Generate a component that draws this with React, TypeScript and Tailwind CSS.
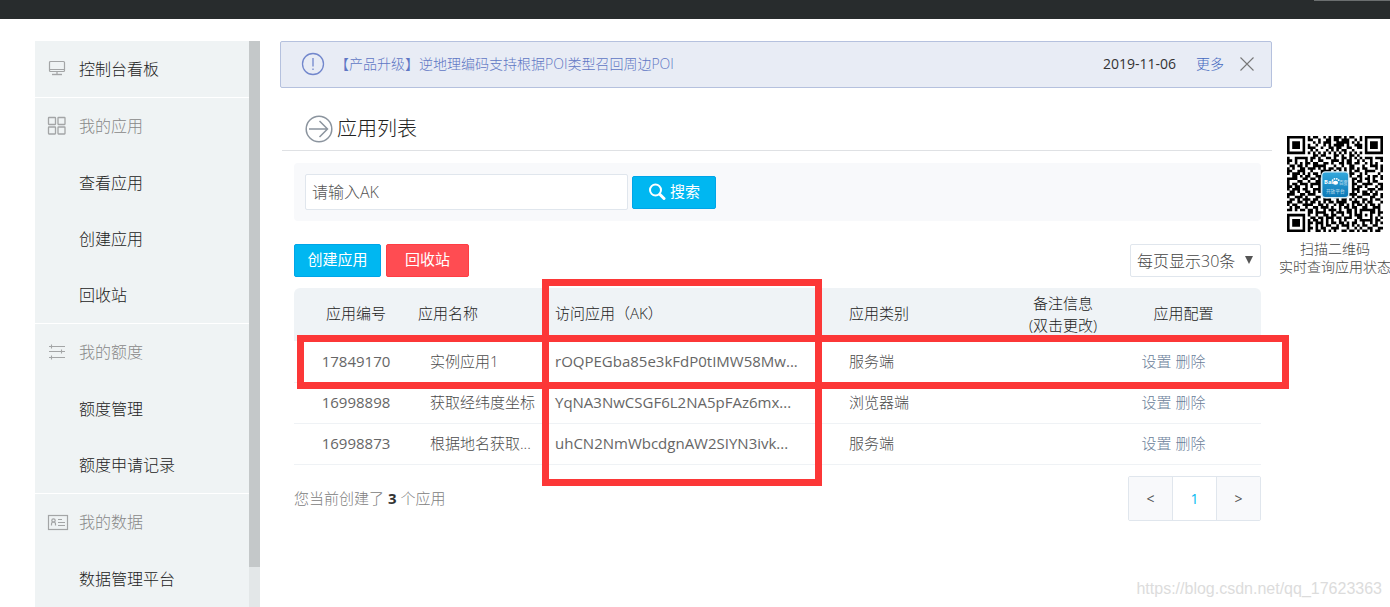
import { useState } from "react";

interface NavGroup {
  title: string;
  icon: "grid" | "sliders" | "card";
  items: string[];
}

interface AppRow {
  id: string;
  name: string;
  ak: string;
  type: string;
}

const groups: NavGroup[] = [
  { title: "我的应用", icon: "grid", items: ["查看应用", "创建应用", "回收站"] },
  { title: "我的额度", icon: "sliders", items: ["额度管理", "额度申请记录"] },
  { title: "我的数据", icon: "card", items: ["数据管理平台"] },
];

const rows: AppRow[] = [
  { id: "17849170", name: "实例应用1", ak: "rOQPEGba85e3kFdP0tIMW58Mw...", type: "服务端" },
  { id: "16998898", name: "获取经纬度坐标", ak: "YqNA3NwCSGF6L2NA5pFAz6mx...", type: "浏览器端" },
  { id: "16998873", name: "根据地名获取...", ak: "uhCN2NmWbcdgnAW2SIYN3ivk...", type: "服务端" },
];

const qrRows = [
  "#######.#.##..#.#.###.#.##..#.#######",
  "#.....#.##..#..##.##.###..#.#.#.....#",
  "#.###.#...#.#.###..#####.#.#..#.###.#",
  "#.###.#.#..#..#.#.####.#..###.#.###.#",
  "#.###.#.###..#..##.##..##..##.#.###.#",
  "#.....#..#.#...#.#.#.##..#....#.....#",
  "#######.#.#.#.#.#.#.#.#.#.#.#.#######",
  "..........##.##...##.#..##.#.........",
  "#..#####.##.#..##.#..##.#.#.#.###.###",
  "##.#...#.#..##...###.#.##..#.#..#...#",
  "#..#.#.##.##..##.#..##.##.##..#.#.#..",
  ".##.##.#..#####...#..#..##...#..###.#",
  "#.#..##.###.#.#.##.##.#.##.#.##...#.#",
  "##..###..#...####.#.#.#.#.##..####..#",
  "#.###.#.#.##.#..#.#..#..##..#.#....#.",
  "..##.#.##..###..........#..##..#.##.#",
  "####..##.##.#............##.#.##.#..#",
  "#...##..#..##............#.##..#.##..",
  "#.##.###.####............##..####..##",
  "##.##..#.#..#............#.##.#...#.#",
  "#.###.##..###............###...###.##",
  ".##.#..##.#.#............#.#.##.#.#..",
  "###..##.###.............###..###.##.#",
  "#..###.#...##.#.#.##.##..#.##...##..#",
  ".##.#.###.##..###..#.##.#.#..##.#.##.",
  "##..##.#.##.#.#.##.####..###.#.##...#",
  "#.##..####..##.#..#.##.#.#.##.#.##.#.",
  ".#.##..#..##.###.#..#.##.##..##..###.",
  "##.#.##.##.#..#.###.#..##.#.######.#.",
  "........##.####..#.###.##.#.#...##.##",
  "#######.#..#..##.##..#..#.###.#.#..#.",
  "#.....#..##.##.###.##.###..##...#.#.#",
  "#.###.#.#.##.#.#.#..#.#...#.#####.##.",
  "#.###.#.##.###.#.##.##.#.##..#..#.#.#",
  "#.###.#.#..#.#.##..#.###.#.#.##..##..",
  "#.....#.##.#.##..###...#..#.#..##..##",
  "#######.#..##.#.#.#..##.##.#.##.#.##.",
];

const qrPath = qrRows
  .map((row, y) => [...row].map((c, x) => (c === "#" ? `M${x} ${y}h1v1h-1z` : "")).join(""))
  .join("");

function QrCode() {
  return (
    <svg viewBox="0 0 37 37" className="h-24 w-24" role="img">
      <path d={qrPath} fill="#000" />
      <defs>
        <linearGradient id="badge" x1="0" y1="0" x2="0" y2="1">
          <stop offset="0" stopColor="#35a9dd" />
          <stop offset="1" stopColor="#0a77b5" />
        </linearGradient>
      </defs>
      <rect x="13.4" y="13.8" width="10.4" height="10" rx="1.4" fill="url(#badge)" stroke="#d9ecf5" strokeWidth="0.5" />
      <text x="14.3" y="18.6" fontSize="2.2" fontWeight="700" fill="#fff">Bai</text>
      <g fill="#fff">
        <ellipse cx="18.7" cy="18" rx="1" ry="0.8" />
        <circle cx="17.6" cy="17" r="0.35" />
        <circle cx="18.3" cy="16.5" r="0.35" />
        <circle cx="19.2" cy="16.5" r="0.35" />
        <circle cx="19.9" cy="17" r="0.35" />
      </g>
      <text x="20" y="18.6" fontSize="1.7" fill="#fff">百度</text>
      <text x="15" y="21.8" fontSize="1.8" fill="#fff">开放平台</text>
    </svg>
  );
}

function MonitorIcon() {
  return (
    <svg width="22" height="20" viewBox="0 0 22 20" fill="none" stroke="#a3a5a6" strokeWidth="1.2">
      <rect x="2.5" y="2.5" width="15" height="10" rx="1" />
      <path d="M3 10.5h14M10 13v2.5" />
      <path d="M5 15.5h10" strokeWidth="1.4" />
    </svg>
  );
}

function GroupIcon({ name }: { name: NavGroup["icon"] }) {
  if (name === "grid") {
    return (
      <svg width="22" height="20" viewBox="0 0 22 20" fill="none" stroke="#a3a5a6" strokeWidth="1.3">
        <rect x="1.5" y="1.5" width="7" height="7" rx="0.5" />
        <rect x="11" y="1.5" width="7" height="7" rx="0.5" />
        <rect x="1.5" y="11" width="7" height="7" rx="0.5" />
        <rect x="11" y="11" width="7" height="7" rx="0.5" />
      </svg>
    );
  }
  if (name === "sliders") {
    return (
      <svg width="22" height="20" viewBox="0 0 22 20" fill="none" stroke="#a3a5a6" strokeWidth="1.1">
        <path d="M2 4.5h16M2 9.5h16M2 15.5h16" />
        <path d="M4.500 2.500v4M14.500 7.500v4M4.500 13.500v4" />
      </svg>
    );
  }
  return (
    <svg width="22" height="20" viewBox="0 0 22 20" fill="none" stroke="#a3a5a6" strokeWidth="1.2">
      <rect x="1.5" y="3.5" width="19" height="14" />
      <circle cx="6.5" cy="8.5" r="1.7" />
      <path d="M4.500 13.500v-1.500a2 2 0 0 1 4 0v1.500M11 7.500h4M11 10.500h7M11 13.500h7" />
    </svg>
  );
}

function Sidebar() {
  return (
    <aside className="flex w-[225px] shrink-0 overflow-hidden text-[16px]">
      <nav className="flex-1 bg-[#eff3f4]">
        <a href="#board" className="flex h-14 items-center gap-2.5 pl-3 text-[#222]">
          <MonitorIcon />
          控制台看板
        </a>
        {groups.map((group) => (
          <section key={group.title} className="border-t border-white">
            <h2 className="flex h-[57px] items-center gap-2.5 pb-0.5 pl-3 text-[#888]">
              <GroupIcon name={group.icon} />
              {group.title}
            </h2>
            {group.items.map((item) => (
              <a key={item} href="#nav" className="flex h-14 items-center pl-11 text-[#222]">
                {item}
              </a>
            ))}
          </section>
        ))}
      </nav>
      <div className="w-[11px] bg-[#e3e7e8]">
        <div className="h-[93%] bg-[#c4c8c9]" />
      </div>
    </aside>
  );
}

function Notice({ onClose }: { onClose: () => void }) {
  return (
    <div className="flex h-[47px] items-center rounded-xs border border-[#b5c1de] bg-[#e8ecf5] pr-4 pb-0.5 pl-5 text-[14px]">
      <svg width="24" height="24" viewBox="0 0 24 24" fill="none" stroke="#7287cc">
        <circle cx="12" cy="12" r="10.5" strokeWidth="1.3" />
        <path d="M12 6v8.5M12 16.5v1.5" strokeWidth="1.3" />
      </svg>
      <a href="#notice" className="ml-2.5 text-[#5f77c4]">
        【产品升级】逆地理编码支持根据POI类型召回周边POI
      </a>
      <span className="ml-auto text-[14px] font-normal text-[#333]">2019-11-06</span>
      <a href="#more" className="ml-5 text-[#4468bf]">更多</a>
      <button type="button" aria-label="关闭" className="ml-[15px]" onClick={onClose}>
        <svg width="16" height="16" viewBox="0 0 16 16" stroke="#777" strokeWidth="1.1">
          <path d="M1.500 1.500l13 13M14.500 1.500l-13 13" />
        </svg>
      </button>
    </div>
  );
}

function AppTable() {
  return (
    <div className="relative mt-[11px]">
      <table className="w-full table-fixed border-collapse text-[15px] text-[#4c4c4c]">
        <thead>
          <tr className="h-[53px] text-[#222]">
            <th className="w-[124px] rounded-tl-md bg-[#eff3f6] pb-0.5 font-light">应用编号</th>
            <th className="w-[123px] bg-[#eff3f6] pb-0.5 text-left font-light">应用名称</th>
            <th className="w-[294px] bg-[#eff3f6] pb-0.5 pl-[14px] text-left font-light">访问应用（AK）</th>
            <th className="w-[165px] bg-[#eff3f6] pb-0.5 pl-[14px] text-left font-light">应用类别</th>
            <th className="w-[126px] bg-[#eff3f6] pb-0.5 leading-[22px] font-light">
              备注信息
              <br />
              (双击更改)
            </th>
            <th className="rounded-tr-md bg-[#eff3f6] pr-5 pb-0.5 font-light">应用配置</th>
          </tr>
        </thead>
        <tbody>
          {rows.map((row) => (
            <tr key={row.id} className="h-[41px] border-b border-[#eff2f5] whitespace-nowrap">
              <td className="text-center font-normal text-[#666]">{row.id}</td>
              <td className="pl-3">{row.name}</td>
              <td className="pl-[14px] font-normal text-[#666]">{row.ak}</td>
              <td className="pl-[14px]">{row.type}</td>
              <td />
              <td className="pr-10 text-center text-[#6b809a]">
                <a href="#set">设置</a> <a href="#del">删除</a>
              </td>
            </tr>
          ))}
        </tbody>
      </table>

      {/* red highlight frames */}
      <div className="pointer-events-none absolute top-[47px] -right-7 left-[3px] h-[54px] border-[7px] border-[#fc3737]" />
      <div className="pointer-events-none absolute -top-[9px] left-[248px] h-[207px] w-[280px] border-[7px] border-[#fc3737]" />
    </div>
  );
}

export default function App() {
  const [keyword, setKeyword] = useState("");
  const [showNotice, setShowNotice] = useState(true);

  return (
    <div className="relative flex h-screen flex-col overflow-hidden bg-white font-['Open_Sans','Noto_Sans_CJK_SC',sans-serif] font-light">
      <header className="flex h-[19px] shrink-0 justify-end bg-[#282c2d]">
        <div className="h-px w-19 bg-[#6b6f70]" />
      </header>

      <div className="flex min-h-0 flex-1 pt-[22px] pl-[35px]">
        <Sidebar />

        <main className="ml-5 min-w-0 flex-1">
          {showNotice && <Notice onClose={() => setShowNotice(false)} />}

          <div className="ml-0.5 flex h-[63px] items-center gap-1 border-b border-[#dfe1e4] pt-5 pl-[23px]">
            <svg width="28" height="28" viewBox="0 0 28 28" fill="none" stroke="#8b949e" strokeWidth="1.5">
              <circle cx="14" cy="14" r="12.8" />
              <path d="M4 14h18M14.500 6l8 8-8 8" />
            </svg>
            <h1 className="text-[20px] text-[#222]">应用列表</h1>
          </div>

          <div className="mt-3 mr-[11px] ml-[14px]">
            <form className="flex h-[58px] items-center gap-1 rounded bg-[#f8f9fb] px-[11px]" onSubmit={(e) => e.preventDefault()}>
              <input
                type="text"
                aria-label="请输入AK"
                placeholder="请输入AK"
                value={keyword}
                onChange={(e) => setKeyword(e.target.value)}
                className="h-9 w-[323px] rounded-xs border border-[#e0e6ed] bg-white px-1.5 text-[16px] text-[#333] placeholder:text-[#555]"
              />
              <button type="submit" className="flex h-[33px] w-21 items-center justify-center gap-1 rounded-xs border border-[#00a5e8] bg-[#00b7f1] pb-0.5 text-[15px] font-normal text-white">
                <svg width="18" height="18" viewBox="0 0 18 18" fill="none" stroke="#fff" strokeLinecap="round">
                  <circle cx="7.5" cy="8" r="5.5" strokeWidth="2" />
                  <path d="M12 12.500l4 4" strokeWidth="3" />
                </svg>
                搜索
              </button>
            </form>

            <div className="mt-[23px] flex h-[33px] gap-[5px] text-[15px]">
              <button type="button" className="w-[87px] rounded-xs border border-[#00a5e8] bg-[#00b7f1] pb-0.5 font-normal text-white">创建应用</button>
              <button type="button" className="w-[83px] rounded-xs border border-[#ff3d44] bg-[#ff4c52] pb-0.5 font-normal text-white">回收站</button>
              <div className="relative ml-auto">
                <select aria-label="每页显示" className="h-full w-[131px] appearance-none rounded-xs border border-[#e0e6ed] bg-white pl-1.5 text-[16px] text-[#444]">
                  <option>每页显示30条</option>
                  <option>每页显示50条</option>
                </select>
                <svg className="pointer-events-none absolute top-3 right-2" width="8" height="8" viewBox="0 0 8 8">
                  <path d="M0 0h8l-4 8z" fill="#555" />
                </svg>
              </div>
            </div>

            <AppTable />

            <div className="mt-[11px] flex h-[45px] items-center justify-between text-[15px] text-[#808080]">
              <p>
                您当前创建了 <b className="font-bold text-[#333]">3</b> 个应用
              </p>
              <div className="flex h-full w-[133px] divide-x divide-[#e0e6ed] overflow-hidden rounded-xs border border-[#e0e6ed] text-[14px] font-normal text-[#555]">
                <button type="button" className="flex-1 bg-[#f8f9fb]">&lt;</button>
                <button type="button" className="flex-1 bg-white text-[#00b7f1]">1</button>
                <button type="button" className="flex-1 bg-[#f8f9fb]">&gt;</button>
              </div>
            </div>
          </div>
        </main>

        <div className="ml-2 flex w-[110px] shrink-0 flex-col items-center pt-[95px] text-center text-[14px] leading-[18px] whitespace-nowrap text-[#444]">
          <QrCode />
          <p className="mt-2">
            扫描二维码
            <br />
            实时查询应用状态
          </p>
        </div>
      </div>

      <span className="absolute right-2 bottom-1.5 font-['Liberation_Sans',sans-serif] text-[16px] font-normal text-[#dcdcdc]">
        https://blog.csdn.net/qq_17623363
      </span>
    </div>
  );
}
